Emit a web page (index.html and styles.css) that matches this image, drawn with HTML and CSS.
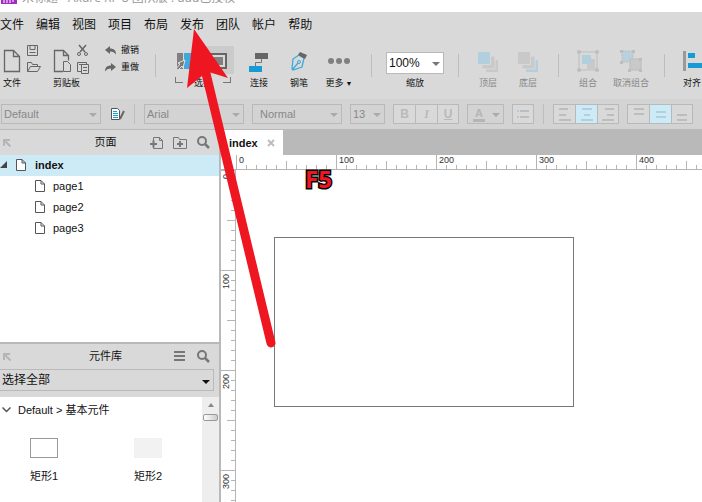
FILE: index.html
```html
<!DOCTYPE html>
<html lang="zh-CN">
<head>
    <meta charset="UTF-8">
    <meta name="viewport" content="width=device-width, initial-scale=1.0">
    <title>Axure RP 8</title>
    <link rel="stylesheet" href="styles.css">
</head>
<body>
<!-- Shared icons -->
<svg class="defs" aria-hidden="true">
    <symbol id="icon-page" viewBox="0 0 10 12">
        <path d="M.5.5h5.500l3.500 3.500v7.500h-9zM6 .5v3.500h3.500" fill="#fff" stroke="#555"/>
    </symbol>
    <symbol id="icon-search" viewBox="0 0 13 13">
        <circle cx="5" cy="5" r="4" fill="none" stroke="#777" stroke-width="2"/>
        <path d="M8 8l4 4" stroke="#777" stroke-width="2.500"/>
    </symbol>
    <symbol id="icon-dock" viewBox="0 0 8 8">
        <path d="M1 7V1h6M1 1l6.500 6.500" fill="none" stroke="#b5b5b5" stroke-width="2"/>
    </symbol>
</svg>

<!-- Title bar -->
<div class="title-bar">
    <svg class="logo" width="16" height="16" viewBox="0 0 16 16">
        <path fill="#a32cc4" d="M0 0h16v16H0z"/>
        <path d="M3 15V7M6 15V9h3v6M12 14V6M12 8h3" fill="none" stroke="#fff"/>
    </svg>
    <span>未标题 - Axure RP 8 团队版 : ddd已授权</span>
</div>

<!-- Menu -->
<nav class="menu">
    <a href="#">文件</a>
    <a href="#">编辑</a>
    <a href="#">视图</a>
    <a href="#">项目</a>
    <a href="#">布局</a>
    <a href="#">发布</a>
    <a href="#">团队</a>
    <a href="#">帐户</a>
    <a href="#">帮助</a>
</nav>

<!-- Main toolbar -->
<div class="toolbar">
    <div class="tool-group file-group">
        <div class="icons">
            <svg width="38" height="30" viewBox="0 0 38 30" fill="none" stroke="#666">
                <path d="M1.500 6.500h9l6 6v15h-15zM10.500 6.500v6h6" stroke-width="1.300"/>
                <path d="M24.500 1.500h10v10h-10zM27 1.500v4h5v-4M26.500 8.500h6"/>
                <path d="M24.500 27.500v-9h4l1 2h5v2M24.500 27.500l3-5h10l-3 5z"/>
            </svg>
        </div>
        <button class="label">文件</button>
    </div>
    <div class="tool-group clip-group">
        <div class="icons">
            <svg width="38" height="30" viewBox="0 0 38 30" fill="none" stroke="#666">
                <path d="M10 27.500H1.500v-21h9l5 5v5M10.500 6.500v5h5" stroke-width="1.300"/>
                <path d="M10.500 17.500h4l3 3v7h-7z" fill="#d9d9d9"/>
                <path d="M26 1l6 7M33 1l-6 7" stroke-width="1.500"/>
                <circle cx="26" cy="10" r="1.500"/><circle cx="33" cy="10" r="1.500"/>
                <path d="M28 27.500h-3.500v-9h9v2M26 20.500h4"/>
                <path d="M28.500 20.500h7v9h-7zM30 23.500h4M30 26.500h4"/>
            </svg>
        </div>
        <button class="label">剪贴板</button>
    </div>
    <div class="history">
        <button class="label">
            <svg width="12" height="9" viewBox="0 0 12 9"><path d="M0 4l5-4v2.500c4 0 6 2 6 6C9.500 6.500 8 5.500 5 5.500V8z" fill="#666"/></svg>
            撤销
        </button>
        <button class="label">
            <svg width="12" height="9" viewBox="0 0 12 9"><path d="M11 4L6 0v2.500c-4 0-6 2-6 6C1.500 6.500 3 5.500 6 5.500V8z" fill="#666"/></svg>
            重做
        </button>
    </div>
    <span class="divider"></span>
    <div class="tool-group select-group">
        <div class="icons">
            <svg width="60" height="30" viewBox="0 0 60 30">
                <path d="M31 2h28v28H31z" fill="#cbcbcb"/>
                <path d="M2 9h6v16H2z" fill="#808080"/>
                <path d="M9 9h14v16H9z" fill="#3fa9dc"/>
                <path d="M10 16l-7 3 2 1-4 5 2 1 4-4 1 2z" fill="#777" stroke="#e4e4e4"/>
                <path d="M35 10h16v14H35z" fill="#d9d9d9" stroke="#666" stroke-width="2"/>
                <path d="M39 13h9v8h-9z" fill="#808080"/>
            </svg>
        </div>
        <div class="bracket"><i></i><button class="label">选择</button><i></i></div>
    </div>
    <button class="tool label">
        <svg width="20" height="30" viewBox="0 0 20 30">
            <path d="M6 9h13v6H6z" fill="#666"/><path d="M12.500 15v3.500h-6V23" fill="none" stroke="#777"/>
            <path d="M0 22h13v6H0z" fill="#169bd5"/>
        </svg>
        连接
    </button>
    <button class="tool label">
        <svg width="16" height="30" viewBox="0 0 16 30">
            <path d="M8 11l5 3-2 9-9 3-1-1 1-10zM2 25l5-6" fill="none" stroke="#3fa9dc" stroke-width="1.300"/>
            <circle cx="8" cy="18" r="1.500" fill="none" stroke="#3fa9dc"/>
            <path d="M7 11l2-3 7 3-2 4z" fill="#666"/>
        </svg>
        钢笔
    </button>
    <button class="tool label">
        <svg width="22" height="30" viewBox="0 0 22 30" fill="#808080">
            <circle cx="3" cy="17" r="3"/><circle cx="11" cy="17" r="3"/><circle cx="19" cy="17" r="3"/>
        </svg>
        <span>更多<small>▼</small></span>
    </button>
    <span class="divider more-divider"></span>
    <div class="zoom-group">
        <div class="select-box zoom-select">
            <select id="zoom"><option>100%</option></select>
        </div>
        <label class="label" for="zoom">缩放</label>
    </div>
    <span class="divider"></span>
    <button class="tool label disabled first-tool">
        <svg width="20" height="30" viewBox="0 0 20 30">
            <path d="M8 16h12v12H8z" fill="#c9c9c9"/><path d="M4 12h13v13H4z" fill="#c9c9c9" stroke="#d9d9d9"/>
            <path d="M-.5 7.500h13v13h-13z" fill="#b1cfdd" stroke="#d9d9d9"/>
        </svg>
        顶层
    </button>
    <button class="tool label disabled">
        <svg width="20" height="30" viewBox="0 0 20 30">
            <path d="M8 16h12v12H8z" fill="#b1cfdd"/><path d="M4 12h13v13H4z" fill="#c9c9c9" stroke="#d9d9d9"/>
            <path d="M-.5 7.500h13v13h-13z" fill="#c9c9c9" stroke="#d9d9d9"/>
        </svg>
        底层
    </button>
    <span class="divider group-divider"></span>
    <button class="tool label disabled first-tool">
        <svg width="22" height="30" viewBox="0 0 22 30">
            <path d="M10 15h8v10h-8z" fill="#c9c9c9"/><path d="M5 11h9v9H5z" fill="#b1cfdd"/>
            <path d="M2 8h18v18H2z" fill="none" stroke="#bdbdbd"/>
            <g fill="#bdbdbd"><circle cx="2" cy="8" r="2"/><circle cx="20" cy="8" r="2"/><circle cx="2" cy="26" r="2"/><circle cx="20" cy="26" r="2"/></g>
        </svg>
        组合
    </button>
    <button class="tool label disabled ungroup">
        <svg width="22" height="30" viewBox="0 0 22 30">
            <path d="M2 7h11v11H2z" fill="#b9d1dc" stroke="#bdbdbd" stroke-dasharray="2 1"/>
            <path d="M10 15h11v11H10z" fill="#c9c9c9" stroke="#bdbdbd"/>
            <path d="M0 6h3v3H0zM12 6h3v3h-3zM0 17h3v3H0zM19 14h3v3h-3zM8 25h3v3H8zM19 25h3v3h-3z" fill="#bdbdbd"/>
        </svg>
        取消组合
    </button>
    <span class="divider group-divider"></span>
    <button class="tool label align-tool">
        <svg width="40" height="30" viewBox="0 0 40 30">
            <path d="M0 7h3v20H0z" fill="#999"/><path d="M5 9h7v5H5zM5 19h18v5H5z" fill="#169bd5"/>
        </svg>
        对齐
    </button>
</div>

<!-- Format bar -->
<div class="format-bar">
    <div class="select-box wide"><select aria-label="样式" disabled><option>Default</option></select></div>
    <button class="style-edit" aria-label="编辑样式">
        <svg width="14" height="14" viewBox="0 0 14 14" fill="none">
            <path d="M.5 1.500h6l2 2v9h-8z" fill="#fff" stroke="#555"/>
            <path d="M2 4.500h4M2 6.500h5M2 8.500h5M2 10.500h5" stroke="#169bd5"/>
            <path d="M13 4l-4 8" stroke="#666" stroke-width="2"/>
        </svg>
    </button>
    <span class="divider"></span>
    <div class="select-box wide font-select"><select aria-label="字体" disabled><option>Arial</option></select></div>
    <div class="select-box medium"><select aria-label="字形" disabled><option>Normal</option></select></div>
    <div class="select-box small"><select aria-label="字号" disabled><option>13</option></select></div>
    <div class="segment">
        <button disabled><b>B</b></button>
        <button disabled><em>I</em></button>
        <button disabled><u>U</u></button>
    </div>
    <button class="color-button" disabled><span>A</span></button>
    <div class="segment">
        <button aria-label="项目符号" disabled>
            <svg width="20" height="18" viewBox="0 0 20 18">
                <path d="M4 5h2v2H4zM4 11h2v2H4z" fill="#a5cfe2"/><path d="M7 5h9v2H7zM7 11h9v2H7z" fill="#bdbdbd"/>
            </svg>
        </button>
    </div>
    <span class="divider list-divider"></span>
    <div class="segment lines">
        <button aria-label="左对齐" disabled><svg width="20" height="18"><path d="M4 3h9v2H4zM4 9h7v2H4zM4 14h12v2H4z"/></svg></button>
        <button aria-label="居中" class="active" disabled><svg width="20" height="18"><path d="M5 3h10v2H5zM7 9h6v2H7zM4 14h12v2H4z"/></svg></button>
        <button aria-label="右对齐" disabled><svg width="20" height="18"><path d="M7 3h9v2H7zM9 9h7v2H9zM4 14h12v2H4z"/></svg></button>
    </div>
    <div class="segment lines">
        <button aria-label="顶部" disabled><svg width="20" height="18"><path d="M5 3h10v2H5zM5 8h10v2H5z"/></svg></button>
        <button aria-label="中部" class="active" disabled><svg width="20" height="18"><path d="M5 6h10v2H5zM5 11h10v2H5z"/></svg></button>
        <button aria-label="底部" disabled><svg width="20" height="18"><path d="M5 9h10v2H5zM5 14h10v2H5z"/></svg></button>
    </div>
</div>

<div class="workspace">
    <!-- Sidebar -->
    <div class="sidebar">
        <div class="pages">
            <div class="panel-header">
                <svg class="dock" width="8" height="8"><use href="#icon-dock"/></svg>
                <h2>页面</h2>
                <button aria-label="添加页面">
                    <svg width="13" height="14" viewBox="0 0 13 14" fill="none" stroke="#777">
                        <path d="M3.500 5V1.500h6l3 3v8h-9V11M9.500 1.500v3h3"/><path d="M0 8h7M3.500 4.500v7" stroke-width="2"/>
                    </svg>
                </button>
                <button aria-label="添加文件夹">
                    <svg width="14" height="14" viewBox="0 0 14 14" fill="none" stroke="#777">
                        <path d="M.5 12.500v-11h5l1 2h7v9z"/><path d="M4 8h6M7 5v6" stroke-width="2"/>
                    </svg>
                </button>
                <button aria-label="搜索页面"><svg width="13" height="13"><use href="#icon-search"/></svg></button>
            </div>
            <ul class="tree">
                <li class="selected">
                    <svg class="caret" width="7" height="7" viewBox="0 0 7 7"><path d="M7 0v7H0z" fill="#444"/></svg>
                    <svg width="10" height="12"><use href="#icon-page"/></svg>
                    <a href="#">index</a>
                </li>
                <li><svg width="10" height="12"><use href="#icon-page"/></svg><a href="#">page1</a></li>
                <li><svg width="10" height="12"><use href="#icon-page"/></svg><a href="#">page2</a></li>
                <li><svg width="10" height="12"><use href="#icon-page"/></svg><a href="#">page3</a></li>
            </ul>
        </div>
        <div class="library">
            <div class="panel-header">
                <svg class="dock" width="8" height="8"><use href="#icon-dock"/></svg>
                <h2>元件库</h2>
                <button aria-label="元件库菜单">
                    <svg width="11" height="11" viewBox="0 0 11 11"><path d="M0 0h11v2H0zM0 4h11v2H0zM0 8h11v2H0z" fill="#777"/></svg>
                </button>
                <button aria-label="搜索元件"><svg width="13" height="13"><use href="#icon-search"/></svg></button>
            </div>
            <div class="library-filter">
                <div class="select-box"><select aria-label="元件库"><option>选择全部</option></select></div>
            </div>
            <div class="library-body">
                <div class="widgets">
                    <h3>
                        <svg width="9" height="6" viewBox="0 0 9 6"><path d="M.5.5l4 4 4-4" fill="none" stroke="#555" stroke-width="1.500"/></svg>
                        Default &gt; 基本元件
                    </h3>
                    <div class="widget-list">
                        <div class="widget"><i></i>矩形1</div>
                        <div class="widget filled"><i></i>矩形2</div>
                    </div>
                </div>
                <div class="scrollbar"><i class="up"></i><i class="thumb"></i></div>
            </div>
        </div>
    </div>

    <!-- Editor -->
    <div class="editor">
        <div class="tabs">
            <div class="tab">
                <a href="#">index</a>
                <button aria-label="关闭">
                    <svg width="8" height="8" viewBox="0 0 8 8"><path d="M1 1l6 6M7 1L1 7" stroke="#bdbdbd" stroke-width="2"/></svg>
                </button>
            </div>
        </div>
        <div class="ruler-x"><span>0</span><span>100</span><span>200</span><span>300</span><span>400</span></div>
        <div class="stage">
            <div class="ruler-y"><span>0</span><span>100</span><span>200</span><span>300</span></div>
            <div class="canvas">
                <div class="shape"></div>
                <strong class="note">F5</strong>
            </div>
        </div>
    </div>
</div>

<!-- Pointer to the publish menu -->
<svg class="pointer" width="50" height="322" viewBox="0 0 50 322">
    <path d="M16 32L84 314" fill="none" stroke="#ee1620" stroke-width="9" stroke-linecap="round"/>
    <path d="M7 0L41 49 22 43 15 47 0 59z" fill="#ee1620"/>
</svg>
</body>
</html>
```
FILE: styles.css
```css
* {
    box-sizing: border-box;
}

body {
    font-family: "Liberation Sans", "Noto Sans CJK SC", sans-serif;
    font-size: 11px;
    color: #111;
    background: #d9d9d9;
    margin: 0;
    height: 100vh;
    display: flex;
    flex-direction: column;
    overflow: hidden;
}

button {
    font: inherit;
    color: inherit;
    background: none;
    border: none;
    padding: 0;
}

a {
    color: inherit;
    text-decoration: none;
}

svg {
    display: block;
    flex: none;
}

.defs {
    position: absolute;
    width: 0;
    height: 0;
}

/* Title bar */
.title-bar {
    height: 12px;
    flex: none;
    display: flex;
    align-items: flex-end;
    gap: 5px;
    padding: 0 0 6px 1px;
    background: #fff;
    color: #999;
    font-family: "Open Sans", "Noto Sans CJK SC", sans-serif;
    font-size: 12px;
    line-height: 16px;
    overflow: hidden;
}

.logo {
    margin-bottom: 2px;
}

/* Menu */
.menu {
    height: 24px;
    flex: none;
    display: flex;
    align-items: center;
    gap: 12px;
    padding-bottom: 2px;
    font-size: 12px;
}

/* Toolbar */
.toolbar {
    height: 63px;
    flex: none;
    display: flex;
    padding-top: 8px;
    overflow: hidden;
    white-space: nowrap;
}

.toolbar > * {
    flex: none;
}

.label {
    font-size: 9px;
    line-height: 12px;
}

.icons {
    height: 30px;
    margin-bottom: 3px;
}

.tool-group .label {
    display: block;
}

.file-group {
    width: 50px;
    margin-left: 3px;
}

.clip-group {
    width: 52px;
}

.history {
    width: 50px;
    display: flex;
    flex-direction: column;
    gap: 5px;
}

.history .label {
    display: flex;
    align-items: center;
    gap: 4px;
}

.divider {
    width: 1px;
    height: 23px;
    flex: none;
    background: #bdbdbd;
}

.toolbar .divider {
    margin-top: 10px;
}

.select-group {
    width: 64px;
    margin-left: 19px;
}

.bracket {
    display: flex;
    justify-content: space-between;
    width: 56px;
}

.bracket i {
    width: 8px;
    height: 6px;
    border: 1px solid #777;
    border-width: 0 0 1px 1px;
}

.bracket i:last-child {
    border-width: 0 1px 1px 0;
}

.tool {
    width: 40px;
    height: 45px;
    display: flex;
    flex-direction: column;
    align-items: center;
    gap: 3px;
}

.tool small {
    font-size: 7px;
    margin-left: 2px;
}

.disabled {
    color: #888;
}

.first-tool {
    margin-left: 9px;
}

.ungroup {
    width: 46px;
}

.toolbar .more-divider {
    margin-left: 12px;
}

.toolbar .group-divider {
    margin-left: 10px;
}

.align-tool {
    align-items: flex-start;
    margin-left: 18px;
}

.zoom-group {
    width: 58px;
    margin: 8px 14px 0;
    display: flex;
    flex-direction: column;
    align-items: center;
    gap: 3px;
}

/* Drop-downs */
.select-box {
    position: relative;
    height: 20px;
    border: 1px solid #b9b9b9;
    color: #888;
}

.select-box::after {
    content: "";
    position: absolute;
    right: 3px;
    top: 8px;
    border: 4px solid transparent;
    border-top-color: #aaa;
    border-bottom: none;
    pointer-events: none;
}

.select-box select {
    appearance: none;
    display: block;
    width: 100%;
    height: 100%;
    border: none;
    padding: 0 0 0 2px;
    background: transparent;
    font: inherit;
    color: inherit;
    opacity: 1;
}

.zoom-select {
    width: 58px;
    height: 22px;
    background: #fff;
    color: #111;
    font-size: 12px;
}

.zoom-select::after {
    top: 9px;
    border-top-color: #777;
}

/* Format bar */
.format-bar {
    height: 31px;
    flex: none;
    display: flex;
    gap: 8px;
    padding: 5px 0 0 1px;
    background: #d3d3d3;
    border-bottom: 1px solid #b9b9b9;
    overflow: hidden;
}

.format-bar .select-box,
.format-bar button {
    flex: none;
}

.wide {
    width: 100px;
}

.medium {
    width: 90px;
}

.medium select {
    padding-left: 7px;
}

.small {
    width: 35px;
}

.format-bar .divider {
    height: 20px;
}

.style-edit {
    width: 16px;
    height: 20px;
    margin: 0 -1px 0 2px;
}

.font-select {
    margin-left: 1px;
}

.segment {
    display: flex;
    height: 20px;
}

.segment button {
    width: 22px;
    display: flex;
    align-items: center;
    justify-content: center;
    border: 1px solid #b9b9b9;
    border-right: none;
    background: #d9d9d9;
    color: #b9b9b9;
    font-size: 12px;
}

.segment button:last-child {
    border-right: 1px solid #b9b9b9;
}

.segment em {
    font-family: "Liberation Serif", serif;
    font-weight: bold;
}

.segment u {
    font-weight: bold;
}

.lines path {
    fill: #bdbdbd;
}

.segment .active {
    background: #cdebf7;
}

.segment .active path {
    fill: #b1cfdd;
}

.color-button {
    position: relative;
    width: 37px;
    height: 20px;
    border: 1px solid #b9b9b9;
    color: #b5b5b5;
    font-weight: bold;
    text-align: left;
    padding-left: 5px;
}

.color-button span {
    display: block;
    width: 12px;
    border-bottom: 3px solid #b5b5b5;
    line-height: 12px;
    text-align: center;
}

.color-button::after {
    content: "";
    position: absolute;
    right: 3px;
    top: 8px;
    border: 4px solid transparent;
    border-top-color: #aaa;
    border-bottom: none;
}

.list-divider {
    margin: 0 1px;
}

/* Workspace */
.workspace {
    flex: 1;
    min-height: 0;
    display: flex;
}

.sidebar {
    width: 221px;
    flex: none;
    display: flex;
    flex-direction: column;
    background: #fff;
    border-right: 2px solid #b9b9b9;
}

.panel-header {
    height: 25px;
    display: flex;
    align-items: center;
    gap: 10px;
    padding: 0 9px 0 3px;
    background: #d9d9d9;
}

.panel-header h2 {
    flex: 1;
    margin: 0;
    font-size: 11px;
    font-weight: normal;
    line-height: 16px;
    padding-bottom: 2px;
    text-align: center;
}

.pages .panel-header h2 {
    padding-left: 50px;
}

.library .panel-header h2 {
    padding-left: 26px;
}

.library .panel-header {
    gap: 12px;
}

.pages {
    flex: 1;
    min-height: 0;
    overflow: hidden;
}

.tree {
    list-style: none;
    margin: 0;
    padding: 0;
}

.tree li {
    height: 21px;
    display: flex;
    align-items: center;
    gap: 8px;
    padding: 0 0 2px 35px;
}

.tree .selected {
    gap: 9px;
    padding-left: 0;
    background: #cdebf7;
    font-weight: bold;
}

/* Widget library */
.library {
    height: 160px;
    flex: none;
    display: flex;
    flex-direction: column;
    border-top: 2px solid #b9b9b9;
}

.library-filter {
    padding: 0 5px 6px 0;
    background: #d9d9d9;
}

.library-filter .select-box {
    height: 22px;
    border-left: none;
    color: #111;
    font-size: 12px;
}

.library-filter .select-box::after {
    top: 10px;
    border-top-color: #111;
}

.library-body {
    flex: 1;
    min-height: 0;
    display: flex;
}

.widgets {
    flex: 1;
}

.widgets h3 {
    display: flex;
    align-items: center;
    gap: 7px;
    margin: 4px 0 0 2px;
    font-size: 11px;
    font-weight: normal;
    line-height: 18px;
}

.widget-list {
    display: flex;
    gap: 76px;
    padding: 19px 0 0 30px;
}

.widget {
    width: 28px;
    white-space: nowrap;
    line-height: 16px;
}

.widget i {
    display: block;
    height: 20px;
    margin-bottom: 10px;
    border: 1px solid #999;
}

.filled i {
    background: #f2f2f2;
    border-color: #f2f2f2;
}

.scrollbar {
    width: 17px;
    display: flex;
    flex-direction: column;
    align-items: center;
    padding-top: 6px;
    background: #eee;
}

.up {
    border: 3px solid transparent;
    border-bottom: 4px solid #888;
    border-top: none;
}

.thumb {
    width: 15px;
    height: 7px;
    margin-top: 7px;
    border: 1px solid #999;
    border-radius: 2px;
    background: linear-gradient(90deg, #fff, #ccc);
}

/* Editor */
.editor {
    flex: 1;
    min-width: 0;
    display: flex;
    flex-direction: column;
    background: #fff;
}

.tabs {
    height: 25px;
    flex: none;
    background: #b9b9b9;
}

.tab {
    width: 62px;
    height: 25px;
    display: flex;
    align-items: center;
    justify-content: space-between;
    padding: 0 8px;
    background: #fff;
    font-weight: bold;
}

/* Rulers: a tick every 10px, longer at 50 and 100 */
.ruler-x,
.ruler-y {
    flex: none;
    display: flex;
    overflow: hidden;
    font-size: 9px;
    color: #333;
}

.ruler-x {
    height: 15px;
    padding-left: 15px;
    background:
        repeating-linear-gradient(90deg, #b5b5b5 0 1px, transparent 1px 100px),
        repeating-linear-gradient(90deg, #b5b5b5 0 1px, transparent 1px 50px) 0 6px no-repeat,
        repeating-linear-gradient(90deg, #b5b5b5 0 1px, transparent 1px 10px) 0 10px no-repeat;
    background-origin: content-box;
    background-clip: content-box;
    border-bottom: 1px solid #b5b5b5;
}

.ruler-x span {
    width: 100px;
    flex: none;
    padding-left: 3px;
    line-height: 11px;
}

.stage {
    flex: 1;
    min-height: 0;
    display: flex;
}

.ruler-y {
    width: 15px;
    flex-direction: column;
    background:
        repeating-linear-gradient(#b5b5b5 0 1px, transparent 1px 100px),
        repeating-linear-gradient(#b5b5b5 0 1px, transparent 1px 50px) 6px 0 no-repeat,
        repeating-linear-gradient(#b5b5b5 0 1px, transparent 1px 10px) 10px 0 no-repeat;
    border-right: 1px solid #b5b5b5;
}

.ruler-y span {
    height: 100px;
    flex: none;
    width: 11px;
    padding-bottom: 4px;
    line-height: 11px;
    text-align: right;
    writing-mode: vertical-rl;
    transform: rotate(180deg);
}

.canvas {
    flex: 1;
    position: relative;
}

.shape {
    position: absolute;
    left: 38px;
    top: 67px;
    width: 300px;
    height: 170px;
    border: 1px solid #777;
}

.note {
    position: absolute;
    left: 69px;
    top: -7px;
    font: bold 24px/32px "Open Sans", sans-serif;
    color: #ee1620;
    -webkit-text-stroke: 3px #000;
    paint-order: stroke;
}

.pointer {
    position: absolute;
    left: 187px;
    top: 29px;
    overflow: visible;
    pointer-events: none;
}
```
